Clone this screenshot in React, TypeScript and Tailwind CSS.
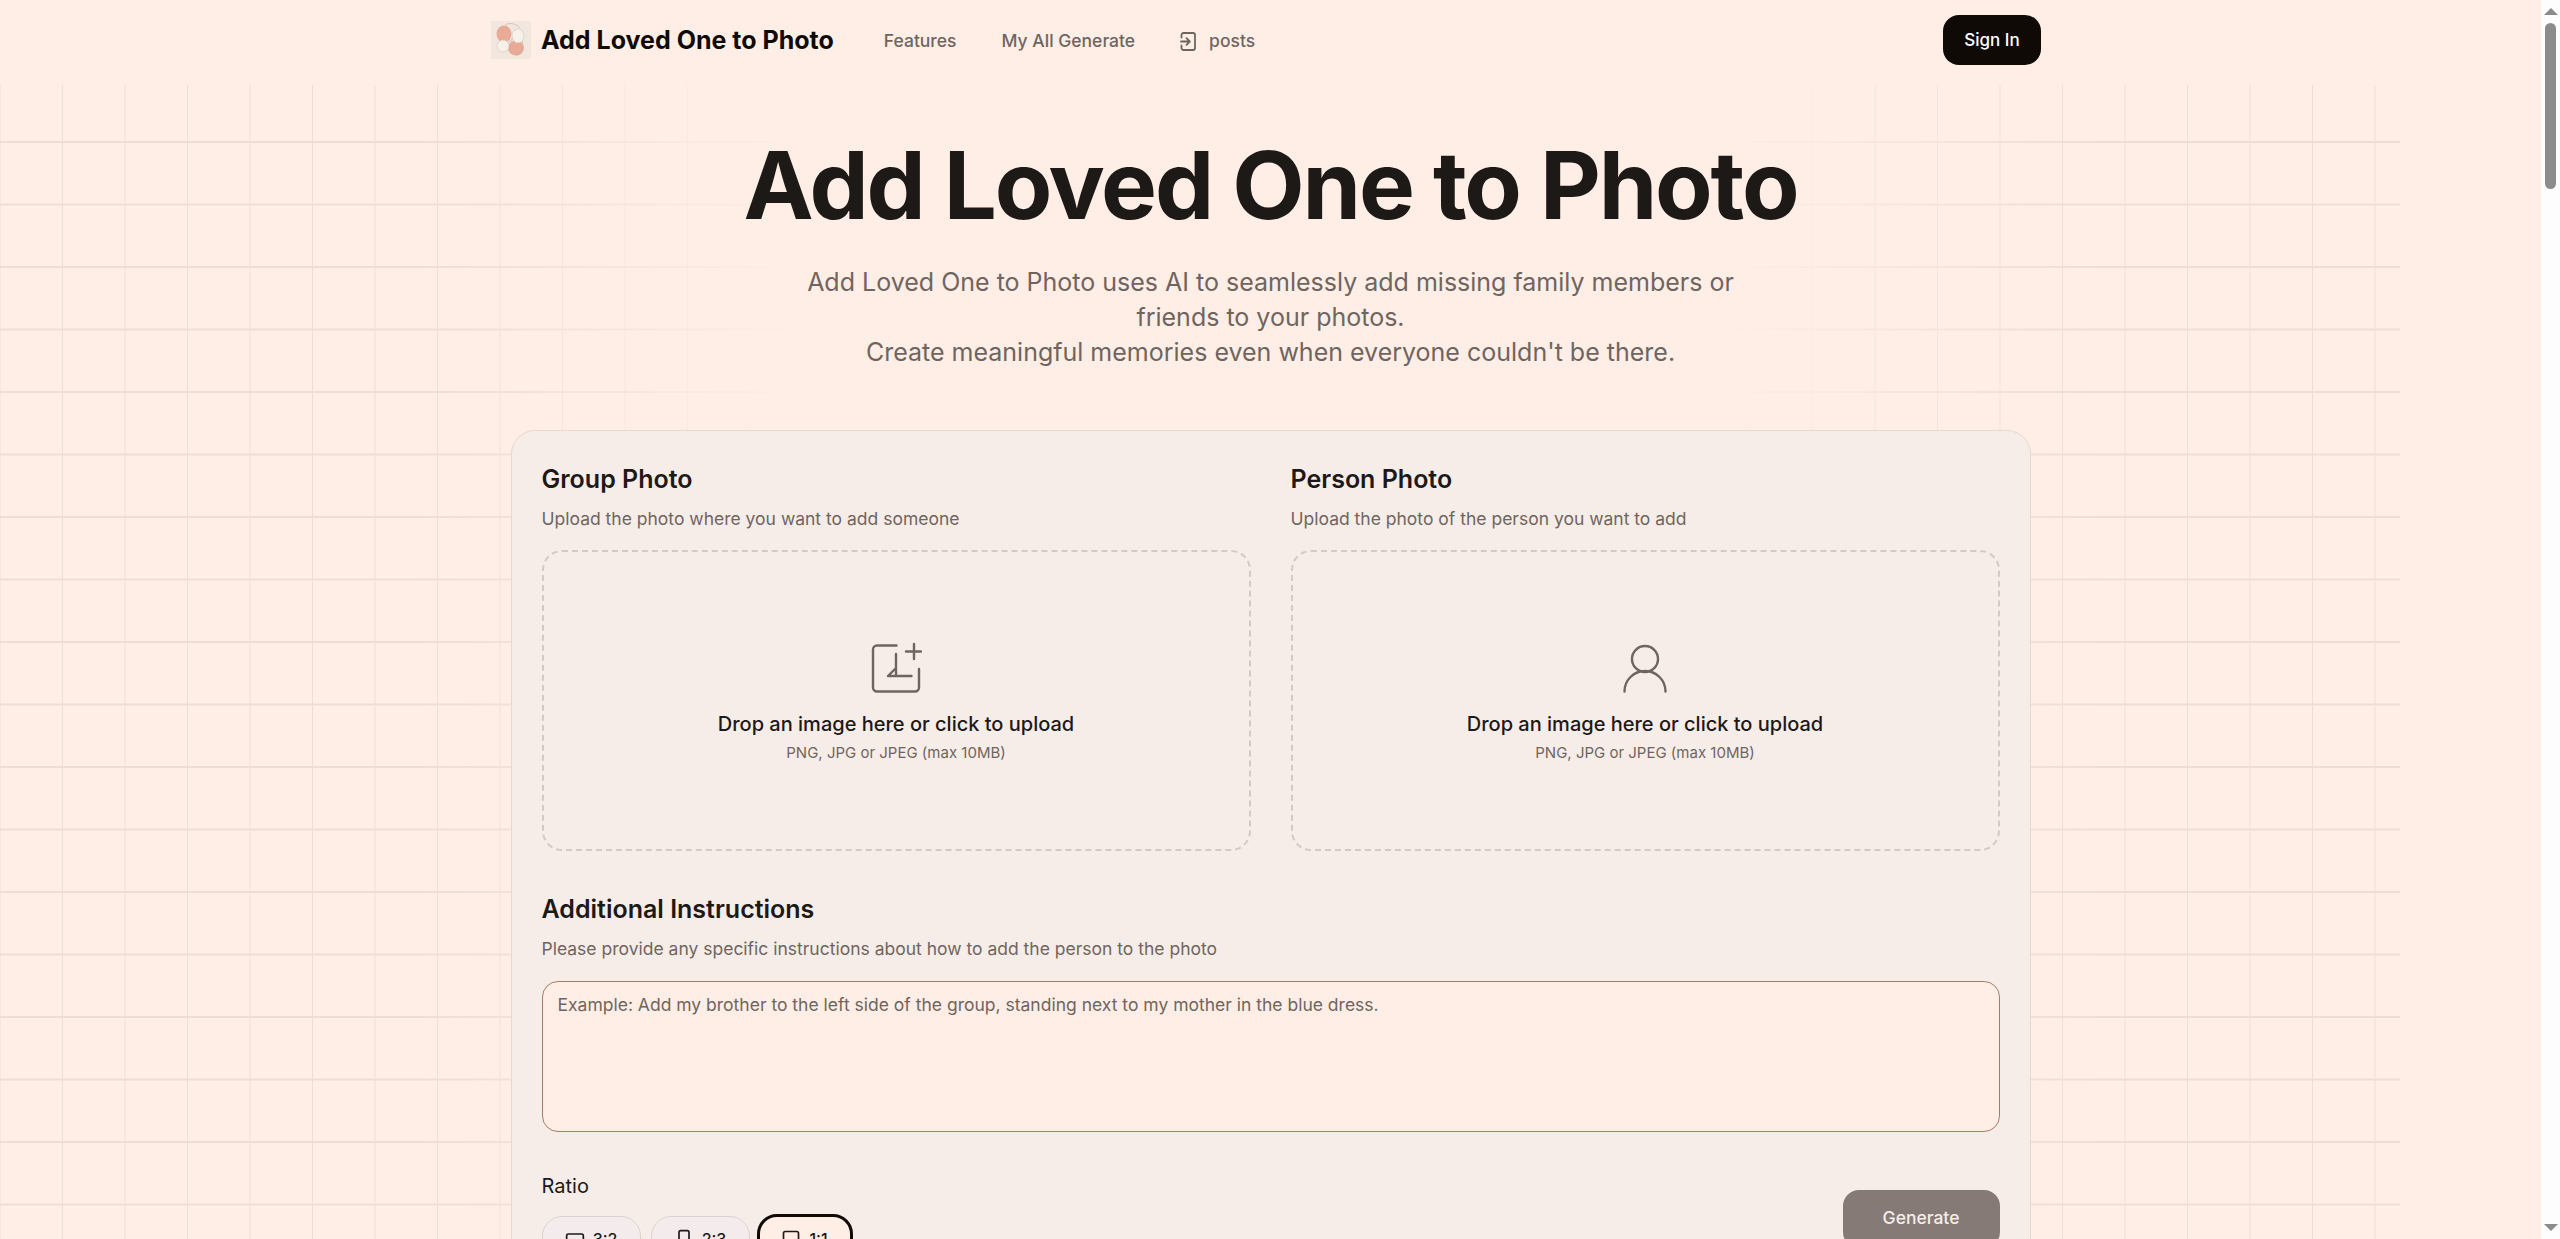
import { RectangleHorizontal, RectangleVertical, Square } from 'lucide-react'

function Logo() {
	return (
		<svg width="40" height="38" viewBox="0 0 40 38" className="shrink-0">
			<rect width="40" height="38" fill="#f2e7de" />
			<ellipse cx="13" cy="13" rx="7.500" ry="8.500" fill="#e9aa96" />
			<ellipse cx="25" cy="27" rx="8" ry="7.500" fill="#e8a996" />
			<ellipse cx="27" cy="15" rx="6" ry="7" fill="#f8f1ea" stroke="#cdbdb0" strokeWidth="0.5" />
			<ellipse cx="12" cy="25" rx="6" ry="6" fill="#f8f1ea" stroke="#cdbdb0" strokeWidth="0.5" />
			<path d="M14 4c5-3 12-1 15 3M31 20c2 5-1 13-6 15M17 17l5 5M22 17l-5 5" fill="none" stroke="#cdb5a6" strokeWidth="0.7" />
		</svg>
	)
}

function PostsIcon() {
	return (
		<svg width="16" height="19" viewBox="0 0 16 19" fill="none" stroke="#6f6560" strokeWidth="1.800" strokeLinecap="round" strokeLinejoin="round">
			<path d="M1.500 5.500V3a2 2 0 0 1 2-2h9.500a2 2 0 0 1 2 2v13a2 2 0 0 1-2 2H3.500a2 2 0 0 1-2-2v-2.500" />
			<path d="M1 9.500h8.500M6.500 6.200l3.300 3.300-3.300 3.300" />
		</svg>
	)
}

function ImagePlusIcon() {
	return (
		<svg width="52" height="54" viewBox="870 640 52 54" fill="none" stroke="#6f6560" strokeWidth="2.400" strokeLinecap="round" strokeLinejoin="round">
			<path d="M896.500 645.500H877a4 4 0 0 0-4 4V687.500a4 4 0 0 0 4 4h38a4 4 0 0 0 4-4V669" />
			<path d="M914 644v15M906 651.500h15" />
			<path d="M896 654v22M911.500 676H888l8-8" />
		</svg>
	)
}

function PersonIcon() {
	return (
		<svg width="52" height="54" viewBox="1619 640 52 54" fill="none" stroke="#6f6560" strokeWidth="2.400" strokeLinecap="round">
			<circle cx="1645" cy="659" r="13" />
			<path d="M1624.500 691.500a20.500 20.500 0 0 1 41 0" />
		</svg>
	)
}

function DropZone({ title, hint, icon }: { title: string; hint: string; icon: React.ReactNode }) {
	return (
		<div className="flex-1 min-w-0">
			<h2 className="text-[25px] leading-[32px] font-semibold text-[#1c1917]">{title}</h2>
			<p className="mt-[12px] text-[17.500px] leading-[24px] text-[#6f6560]">{hint}</p>
			<div className="mt-[19px] h-[301px] rounded-[20px] border-2 border-dashed border-[#d3cac5] flex flex-col items-center pt-[88px]">
				{icon}
				<p className="mt-[16px] text-[20px] leading-[28px] font-medium text-[#1c1917]">Drop an image here or click to upload</p>
				<p className="mt-[5px] text-[15px] leading-[20px] text-[#6f6560]">PNG, JPG or JPEG (max 10MB)</p>
			</div>
		</div>
	)
}

function RatioPill({ label, active, icon }: { label: string; active?: boolean; icon: React.ReactNode }) {
	if (active) {
		return (
			<div className="-mt-[2px] -ml-[3px] h-[50px] w-[96px] rounded-[20px] border-[3px] border-[#0f0a05] bg-[#ffeee6] flex items-center justify-center gap-2 text-[16px] font-medium text-[#1c1917]">
				{icon}
				{label}
			</div>
		)
	}
	return (
		<div className="h-[46px] w-[99px] rounded-[20px] border border-[#ddd2d0] bg-[#f4ebec] flex items-center justify-center gap-2 text-[16px] font-medium text-[#1c1917]">
			{icon}
			{label}
		</div>
	)
}

export default function App() {
	return (
		<div className="h-screen overflow-hidden flex bg-[#ffeee6] font-[Inter,sans-serif]">
			<div className="relative flex-1 min-w-0 overflow-hidden">
				<div className="absolute left-0 top-[85px] bottom-0 w-[2400px] bg-[linear-gradient(to_right,#ecded5_1px,transparent_1px),linear-gradient(to_bottom,#ecded5_1.5px,transparent_1.5px)] bg-[size:62.5px_62.5px] bg-[position:62px_56px] [mask-image:linear-gradient(to_right,black_0,black_420px,transparent_800px,transparent_1720px,black_2100px)]" />

				<header className="relative h-[85px] ml-[491px] w-[1550px] flex items-start pt-[15px]">
					<div className="flex items-center gap-[10px] mt-[6px]">
						<Logo />
						<span className="text-[25px] leading-[38px] font-bold text-[#0f0a05]">Add Loved One to Photo</span>
					</div>
					<nav className="ml-[50px] mt-[7px] h-[38px] flex items-center gap-[45px] text-[17.500px] font-medium text-[#6f6560]">
						<span>Features</span>
						<span>My All Generate</span>
						<span className="flex items-center gap-[13px]">
							<PostsIcon />
							posts
						</span>
					</nav>
					<div className="ml-auto h-[50px] w-[98px] pt-[1px] rounded-[16px] bg-[#0f0a05] text-white text-[17px] font-medium flex items-center justify-center">Sign In</div>
				</header>

				<main className="relative flex flex-col items-center">
					<h1 className="mt-[52px] text-[94px] leading-[96px] font-bold tracking-[-0.0227em] text-[#1c1917]">Add Loved One to Photo</h1>
					<p className="mt-[32px] w-[960px] text-center text-[25px] leading-[35.200px] text-[#6f6560]">
						Add Loved One to Photo uses AI to seamlessly add missing family members or friends to your photos.
						<br />
						Create meaningful memories even when everyone couldn't be there.
					</p>

					<section className="mt-[59px] w-[1520px] rounded-[24px] border border-[#e8d9cf] bg-[#f7ede8] px-[30px] pt-[32px]">
						<div className="flex gap-[40px]">
							<DropZone title="Group Photo" hint="Upload the photo where you want to add someone" icon={<ImagePlusIcon />} />
							<DropZone title="Person Photo" hint="Upload the photo of the person you want to add" icon={<PersonIcon />} />
						</div>

						<h2 className="mt-[42px] text-[25px] leading-[32px] font-semibold text-[#1c1917]">Additional Instructions</h2>
						<p className="mt-[12px] text-[17.500px] leading-[24px] text-[#6f6560]">Please provide any specific instructions about how to add the person to the photo</p>
						<textarea
							readOnly
							placeholder="Example: Add my brother to the left side of the group, standing next to my mother in the blue dress."
							className="mt-[20px] block w-full h-[151px] rounded-[16px] border border-[#a97c64] bg-[#ffeee6] px-[15px] py-[11px] text-[17.500px] leading-[24px] outline-none resize-none placeholder:text-[#6f6560]"
						/>

						<div className="mt-[14px] flex items-start justify-between">
							<div className="pt-[26px]">
								<p className="text-[20px] leading-[28px] text-[#1c1917]">Ratio</p>
								<div className="mt-[16px] flex gap-[10px]">
									<RatioPill label="3:2" icon={<RectangleHorizontal size={20} />} />
									<RatioPill label="2:3" icon={<RectangleVertical size={20} />} />
									<RatioPill label="1:1" active icon={<Square size={20} />} />
								</div>
							</div>
							<div className="mt-[44px] h-[58px] w-[157px] rounded-[16px] bg-[#857a76] text-[#f7ede8] text-[17.500px] font-medium flex items-center justify-center">Generate</div>
						</div>
					</section>
				</main>
			</div>

			<div className="w-[19px] shrink-0 h-full bg-[#fdfdfd] flex flex-col items-center pt-[8px] pb-[8px]">
				<div className="w-0 h-0 border-x-[7px] border-x-transparent border-b-[7px] border-b-[#8c8c8c]" />
				<div className="mt-[8px] w-[11px] h-[166px] rounded-full bg-[#8c8c8c]" />
				<div className="mt-auto w-0 h-0 border-x-[7px] border-x-transparent border-t-[7px] border-t-[#8c8c8c]" />
			</div>
		</div>
	)
}
